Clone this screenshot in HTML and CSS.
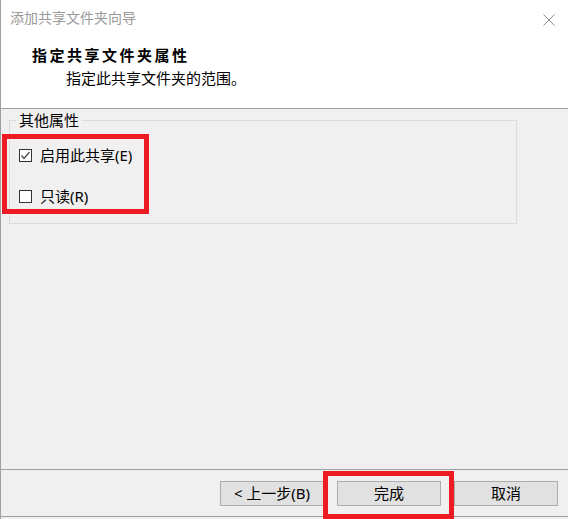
FILE: index.html
```html
<!DOCTYPE html>
<html lang="zh-CN">
<head>
<meta charset="utf-8">
<title>添加共享文件夹向导</title>
<link rel="stylesheet" href="styles.css">
</head>
<body>
<div class="window">
  <div class="header">
    <div class="titlebar">
      <span class="title">添加共享文件夹向导</span>
      <svg class="close" width="12" height="12" viewBox="0 0 12 12"><path d="M0.5 0.5 L11.5 11.5 M11.5 0.5 L0.5 11.5" stroke="#8a8a8a" stroke-width="1" fill="none"/></svg>
    </div>
    <div class="heading">指定共享文件夹属性</div>
    <div class="subheading">指定此共享文件夹的范围。</div>
  </div>
  <div class="main">
    <fieldset class="group">
      <legend class="legend">其他属性</legend>
      <div class="row">
        <span class="check checked"><svg width="11" height="11" viewBox="0 0 11 11"><path d="M1.5 5.5 L4 8.5 L9.5 2" stroke="#4a4a4a" stroke-width="1.3" fill="none"/></svg></span>
        <span class="label">启用此共享(E)</span>
      </div>
      <div class="row row2">
        <span class="check"></span>
        <span class="label">只读(R)</span>
      </div>
    </fieldset>
  </div>
  <div class="footer">
    <button class="btn">&lt; 上一步(B)</button>
    <button class="btn">完成</button>
    <button class="btn">取消</button>
  </div>
  <div class="mark mark-options"></div>
  <div class="mark mark-finish"></div>
</div>
</body>
</html>
```
FILE: styles.css
```css
* { box-sizing: border-box; }
html, body {
  margin: 0;
  padding: 0;
  background: #f0f0f0;
}
body {
  font-family: "Noto Sans", "Noto Sans CJK SC", sans-serif;
  font-size: 15px;
  color: #000;
}
.window {
  position: relative;
  width: 568px;
  height: 519px;
  border-left: 1px solid #a0a0a0;
  display: flex;
  flex-direction: column;
  overflow: hidden;
}
.header {
  height: 109px;
  background: #fff;
  border-bottom: 1px solid #a0a0a0;
  padding-top: 8px;
}
.titlebar {
  display: flex;
  justify-content: space-between;
  align-items: center;
  height: 20px;
  padding-left: 9px;
  padding-right: 13px;
}
.title {
  color: #9a9a9a;
  font-size: 14px;
  line-height: 20px;
}
.close { display: block; margin-top: 4px; }
.heading {
  margin-top: 17px;
  padding-left: 31px;
  font-weight: bold;
  font-size: 15px;
  letter-spacing: 2.5px;
  line-height: 20px;
}
.subheading {
  margin-top: 3px;
  padding-left: 65px;
  font-size: 15px;
  line-height: 20px;
}
.main {
  flex: 1;
  padding: 3px 51px 0 8px;
}
.group {
  margin: 0;
  padding: 17px 9px 17px 9px;
  border: 1px solid #dcdcdc;
  min-inline-size: 0;
  width: 508px;
}
.legend {
  padding: 0 3px;
  margin-left: -3px;
  line-height: 16px;
  font-size: 15px;
}
.row {
  display: flex;
  align-items: center;
  height: 20px;
}
.row2 { margin-top: 21px; }
.check {
  width: 13px;
  height: 13px;
  border: 1px solid #333;
  background: #fff;
  margin-right: 8px;
  display: flex;
  align-items: center;
  justify-content: center;
}
.label { line-height: 20px; }
.footer {
  height: 48px;
  border-top: 1px solid #a0a0a0;
  border-bottom: 1px solid #a0a0a0;
  display: flex;
  justify-content: flex-end;
  align-items: flex-start;
  gap: 13px;
  padding: 11px 10px 0 0;
  margin-bottom: 2px;
}
.btn {
  width: 104px;
  height: 25px;
  background: #e1e1e1;
  border: 1px solid #adadad;
  font-family: inherit;
  font-size: 15px;
  color: #000;
  padding: 0;
  line-height: 23px;
}
.mark {
  position: absolute;
  border: 5px solid #ed1c24;
}
.mark-options {
  left: 1px;
  top: 134px;
  width: 147px;
  height: 80px;
}
.mark-finish {
  left: 322px;
  top: 471px;
  width: 131px;
  height: 48px;
}
```
